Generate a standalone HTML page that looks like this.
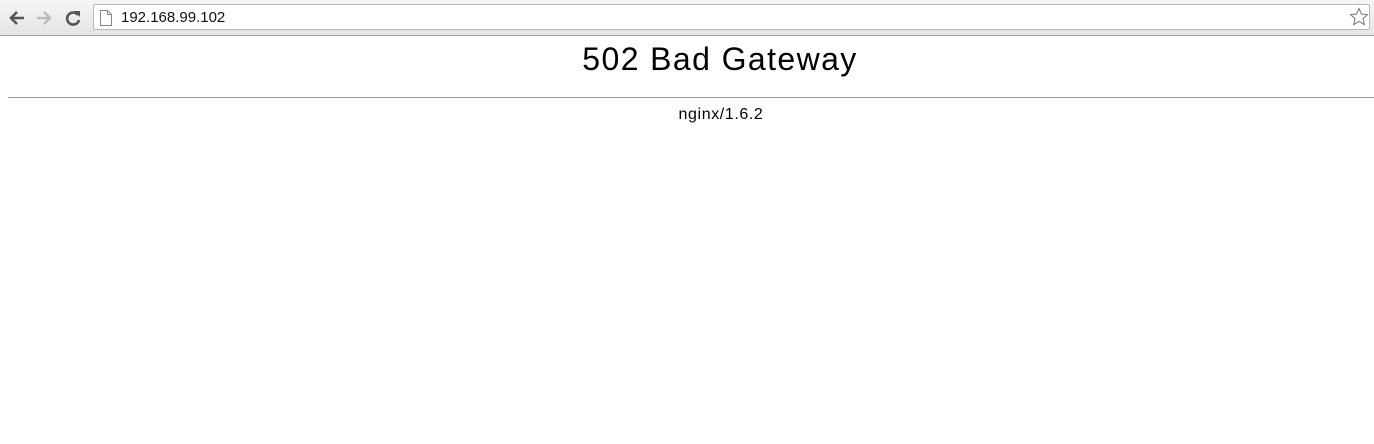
<!DOCTYPE html>
<html><head><style>
body{margin:0;background:#fff;font-family:"Liberation Sans",sans-serif;width:1374px;height:444px;overflow:hidden;position:relative}
.bar{position:absolute;left:0;top:0;width:1374px;height:35px;background:linear-gradient(#f6f6f6,#e4e4e4);border-bottom:1px solid #a8a8a8}
.addr{position:absolute;left:93px;top:4px;width:1277px;height:26px;background:#fff;border:1px solid #b9b9b9;border-radius:2px;box-sizing:border-box}
.url{position:absolute;left:121px;top:9px;font-size:15px;color:#111}
h1{position:absolute;top:41px;left:580px;width:280px;margin:0;text-align:center;font-weight:normal;font-size:32px;letter-spacing:1.4px;white-space:nowrap}
hr{position:absolute;top:97px;left:8px;width:1366px;margin:0;border:0;border-top:1px solid #999;}
.ng{position:absolute;top:106px;left:670px;width:102px;text-align:center;font-size:16px;letter-spacing:0.6px}
</style></head><body>
<div class="bar">
<svg width="90" height="35" style="position:absolute;left:0;top:0">
<path d="M24 18H11M17 12l-6 6 6 6" stroke="#555" stroke-width="2.6" fill="none"/>
<path d="M37 18h13M44 12l6 6-6 6" stroke="#bbb" stroke-width="2.6" fill="none"/>
<path d="M78 15a6 6 0 1 0 1 5" stroke="#555" stroke-width="2.6" fill="none"/><path d="M74 11l6 0 0 6z" fill="#555"/>
</svg>
<div class="addr"></div>
<svg width="14" height="18" style="position:absolute;left:99px;top:9px"><path d="M1.5 1.5h7l4 4v11h-11z M8.5 1.5v4h4" stroke="#888" fill="#fff"/></svg>
<div class="url">192.168.99.102</div>
<svg width="20" height="20" style="position:absolute;left:1349px;top:7px"><path d="M10 1.5l2.5 5.5 6 .6-4.5 4 1.3 6-5.3-3.1-5.3 3.1 1.3-6-4.5-4 6-.6z" stroke="#777" fill="none"/></svg>
</div>
<h1>502 Bad Gateway</h1>
<hr>
<div class="ng">nginx/1.6.2</div>
</body></html>
